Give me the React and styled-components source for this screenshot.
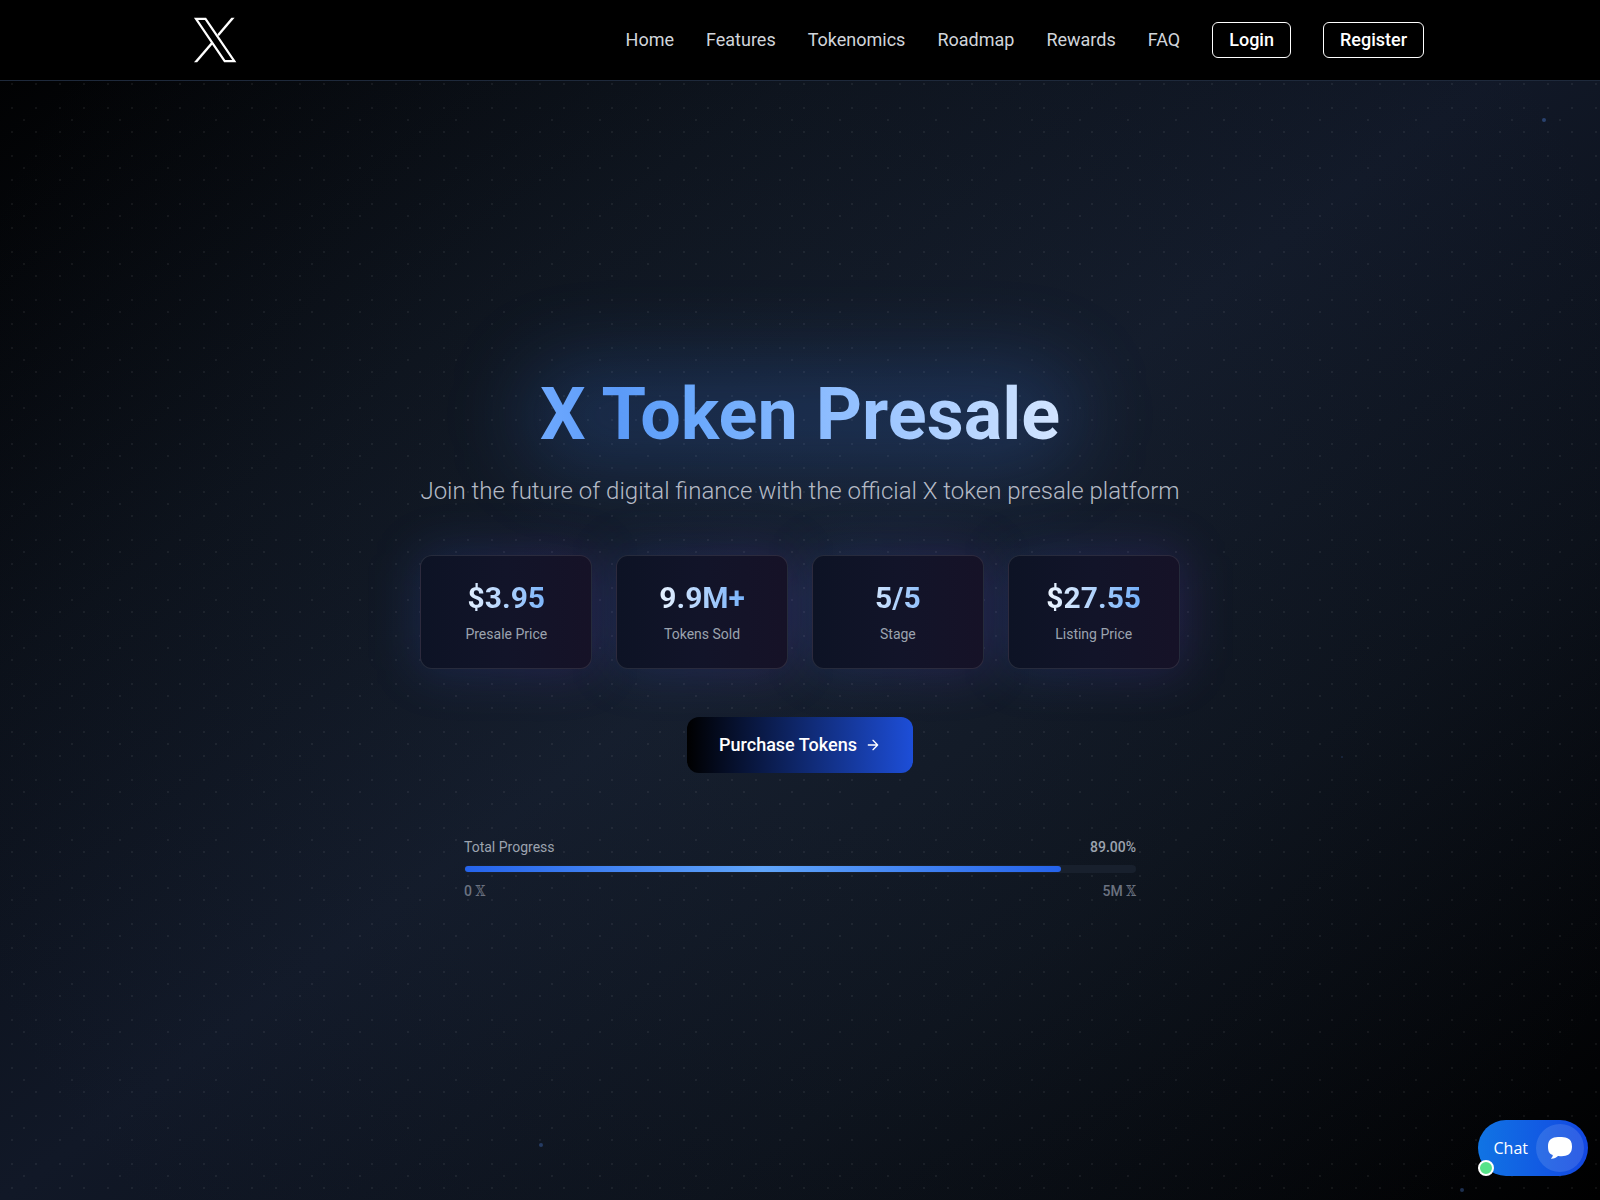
import React from "react";
import styled, { createGlobalStyle } from "styled-components";

const GlobalStyle = createGlobalStyle`
  *, *::before, *::after { box-sizing: border-box; }
  body {
    margin: 0;
    background: #000;
    color: #fff;
    font-family: Roboto, "Liberation Sans", sans-serif;
  }
  h1, p, ul, dl, dd { margin: 0; padding: 0; }
`;

const Page = styled.div`
  position: relative;
  isolation: isolate;
  display: flex;
  flex-direction: column;
  min-height: 100vh;
  overflow: hidden;
  background:
    radial-gradient(circle, rgba(255, 255, 255, 0.06) 1px, transparent 1px) 0 0 / 24px 24px,
    radial-gradient(circle, rgba(255, 255, 255, 0.06) 1px, transparent 1px) 0 0 / 48px 48px,
    radial-gradient(circle, rgba(44, 62, 80, 0.22), transparent 90%),
    linear-gradient(to bottom right, #000, #0b1019 28%, #111827 50%, #0b1019 72%, #000);
`;

const Particle = styled.span`
  position: absolute;
  z-index: -1;
  left: ${(p) => p.$left}%;
  top: ${(p) => p.$top}%;
  width: ${(p) => p.$size}px;
  height: ${(p) => p.$size}px;
  border-radius: 50%;
  background: #4f83dc;
  opacity: ${(p) => p.$opacity};
`;

const Header = styled.header`
  background: #000;
  box-shadow: 0 1px 0 #1e293b;
`;

const HeaderInner = styled.div`
  display: flex;
  align-items: center;
  justify-content: space-between;
  max-width: 1280px;
  margin: 0 auto;
  padding: 0 16px;
`;

const LogoLink = styled.a`
  display: block;
  height: 80px;
`;

const Nav = styled.nav`
  display: flex;
  align-items: center;
  gap: 32px;
`;

const NavLink = styled.a`
  color: #d1d5db;
  font-size: 18px;
  line-height: 28px;
  text-decoration: none;
`;

const AuthButton = styled.button`
  padding: 3px 16px;
  border: 1px solid #fff;
  border-radius: 6px;
  background: transparent;
  color: #fff;
  font: 500 18px/28px Roboto, "Liberation Sans", sans-serif;
  cursor: pointer;
`;

const Hero = styled.main`
  flex: 1;
  display: flex;
  align-items: center;
  justify-content: center;
  padding: 48px 16px;
`;

const HeroContent = styled.div`
  display: flex;
  flex-direction: column;
  align-items: center;
  text-align: center;
`;

const TitleWrap = styled.div`
  position: relative;
  margin-bottom: 24px;

  &::before {
    content: "";
    position: absolute;
    inset: -16px;
    z-index: -1;
    border-radius: 50px;
    background: rgba(59, 130, 246, 0.2);
    filter: blur(40px);
  }
`;

const Title = styled.h1`
  font-size: 72px;
  line-height: 72px;
  font-weight: 700;
  color: transparent;
  background: linear-gradient(to right, #6ea9fe 0%, #5b9af8 15%, #68a7fc 28%, #93c0ff 60%, #d3e5ff 100%);
  background-clip: text;
  -webkit-background-clip: text;
`;

const Subtitle = styled.p`
  margin-bottom: 48px;
  color: #b4bac6;
  font-size: 24px;
  line-height: 32px;
  font-weight: 300;
`;

const Stats = styled.dl`
  display: grid;
  grid-template-columns: repeat(4, 1fr);
  gap: 24px;
  width: 100%;
  margin-bottom: 48px;
`;

const StatCard = styled.div`
  position: relative;
  display: flex;
  flex-direction: column-reverse;
  gap: 8px;
  padding: 24px;
  border: 1px solid rgba(255, 255, 255, 0.1);
  border-radius: 12px;
  background: linear-gradient(to right, #0d1325, #121429 50%, #161227);

  &::before {
    content: "";
    position: absolute;
    inset: -4px;
    z-index: -1;
    border-radius: 16px;
    background: linear-gradient(to right, rgba(59, 110, 246, 0.16), rgba(110, 62, 225, 0.2));
    filter: blur(24px);
  }
`;

const StatLabel = styled.dt`
  color: #9ca3af;
  font-size: 14px;
  line-height: 20px;
`;

const StatValue = styled.dd`
  font-size: 30px;
  line-height: 36px;
  font-weight: 700;
  color: transparent;
  background: linear-gradient(to right, #fff, #60a5fa);
  background-clip: text;
  -webkit-background-clip: text;
`;

const PurchaseButton = styled.button`
  display: inline-flex;
  align-items: center;
  gap: 8px;
  padding: 14px 32px;
  margin-bottom: 64px;
  border: 0;
  border-radius: 12px;
  background: linear-gradient(to right, #000, #1d4ed8);
  color: #fff;
  font: 500 18px/28px Roboto, "Liberation Sans", sans-serif;
  cursor: pointer;
`;

const Progress = styled.section`
  display: flex;
  flex-direction: column;
  gap: 8px;
  width: 100%;
  max-width: 672px;
`;

const ProgressRow = styled.div`
  display: flex;
  justify-content: space-between;
  color: ${(p) => (p.$muted ? "#6b7280" : "#9ca3af")};
  font-family: Roboto, "DejaVu Serif Condensed", "DejaVu Serif", serif;
  font-size: 14px;
  line-height: 20px;
  font-weight: ${(p) => (p.$muted ? 500 : 400)};
`;

const Percent = styled.span`
  font-weight: 500;
`;

const TokenSign = styled.span`
  font-weight: 400;
`;

const Track = styled.div`
  height: 8px;
  padding: 1px;
  border-radius: 4px;
  background: #18202d;
`;

const Fill = styled.div`
  height: 6px;
  border-radius: 3px;
  background: linear-gradient(to right, #2563eb, #60a5fa, #2563eb);
`;

const ChatButton = styled.button`
  position: fixed;
  right: 12px;
  bottom: 24px;
  display: flex;
  align-items: center;
  gap: 8px;
  padding: 4px 4px 4px 16px;
  border: 0;
  border-radius: 28px;
  background: linear-gradient(to right, #1074e4, #1347e2);
  color: #fff;
  font: 400 16px/24px "Open Sans", "Noto Sans", sans-serif;
  cursor: pointer;
`;

const ChatIcon = styled.span`
  display: grid;
  place-items: center;
  width: 48px;
  height: 48px;
  border-radius: 50%;
  background: rgba(255, 255, 255, 0.12);
`;

const OnlineDot = styled.span`
  position: absolute;
  left: 0;
  bottom: 0;
  width: 16px;
  height: 16px;
  border: 2px solid #fff;
  border-radius: 50%;
  background: #57e389;
`;

const LINKS = ["Home", "Features", "Tokenomics", "Roadmap", "Rewards", "FAQ"];

const STATS = [
  { value: "$3.95", label: "Presale Price" },
  { value: "9.9M+", label: "Tokens Sold" },
  { value: "5/5", label: "Stage" },
  { value: "$27.55", label: "Listing Price" },
];

const PARTICLES = [
  { left: 96.4, top: 9.85, size: 4, opacity: 0.4 },
  { left: 33.7, top: 95.25, size: 4, opacity: 0.35 },
  { left: 91.25, top: 99, size: 4, opacity: 0.35 },
  { left: 83.8, top: 63, size: 2, opacity: 0.2 },
];

const PROGRESS = 89;

function Logo() {
  return (
    <svg width="80" height="80" viewBox="0 0 80 80" fill="#fff" aria-hidden="true">
      <path d="M20 18.900H29.500L58.300 61.100H48.700Z" fill="none" stroke="#fff" strokeWidth="2.200" />
      <path d="M55.400 17.800H58.600L42.800 36.200L41.400 34.200Z" />
      <path d="M18 62.200H21.200L37 43.800L35.600 41.800Z" />
    </svg>
  );
}

export default function App() {
  return (
    <Page>
      <GlobalStyle />
      {PARTICLES.map((p) => (
        <Particle key={p.left} $left={p.left} $top={p.top} $size={p.size} $opacity={p.opacity} />
      ))}
      <Header>
        <HeaderInner>
          <LogoLink href="#home" aria-label="X Token">
            <Logo />
          </LogoLink>
          <Nav>
            {LINKS.map((l) => (
              <NavLink key={l} href={`#${l.toLowerCase()}`}>{l}</NavLink>
            ))}
            <AuthButton type="button">Login</AuthButton>
            <AuthButton type="button">Register</AuthButton>
          </Nav>
        </HeaderInner>
      </Header>
      <Hero>
        <HeroContent>
          <TitleWrap>
            <Title>X Token Presale</Title>
          </TitleWrap>
          <Subtitle>Join the future of digital finance with the official X token presale platform</Subtitle>
          <Stats>
            {STATS.map((s) => (
              <StatCard key={s.label}>
                <StatLabel>{s.label}</StatLabel>
                <StatValue>{s.value}</StatValue>
              </StatCard>
            ))}
          </Stats>
          <PurchaseButton type="button">
            Purchase Tokens
            <svg width="16" height="16" viewBox="0 0 24 24" fill="none" stroke="currentColor" strokeWidth="2" strokeLinecap="round" strokeLinejoin="round" aria-hidden="true">
              <path d="M5 12h14M12 5l7 7-7 7" />
            </svg>
          </PurchaseButton>
          <Progress>
            <ProgressRow>
              <span id="progress-label">Total Progress</span>
              <Percent>{PROGRESS.toFixed(2)}%</Percent>
            </ProgressRow>
            <Track role="progressbar" aria-labelledby="progress-label" aria-valuenow={PROGRESS} aria-valuemin={0} aria-valuemax={100}>
              <Fill style={{ width: `${PROGRESS}%` }} />
            </Track>
            <ProgressRow $muted>
              <span>0 <TokenSign>𝕏</TokenSign></span>
              <span>5M <TokenSign>𝕏</TokenSign></span>
            </ProgressRow>
          </Progress>
        </HeroContent>
      </Hero>
      <ChatButton type="button">
        Chat
        <ChatIcon>
          <svg width="24" height="24" viewBox="0 0 24 24" fill="#fff" aria-hidden="true">
            <path d="M8 1.2C12 .8 16 1 19 2C22.500 3.200 24 6 24 10.500C24 15 22.500 18 19 19.200C16.500 20 13 20.300 10 20.100C8.500 21.800 6 22.700 3.600 22.800C3 22.800 2.900 22.200 3.400 21.900C4.400 21.100 4.900 20 4.700 19.100C1.500 18 0 15.500 0 10.500C0 5 2.500 1.700 8 1.200Z" />
          </svg>
        </ChatIcon>
        <OnlineDot />
      </ChatButton>
    </Page>
  );
}
